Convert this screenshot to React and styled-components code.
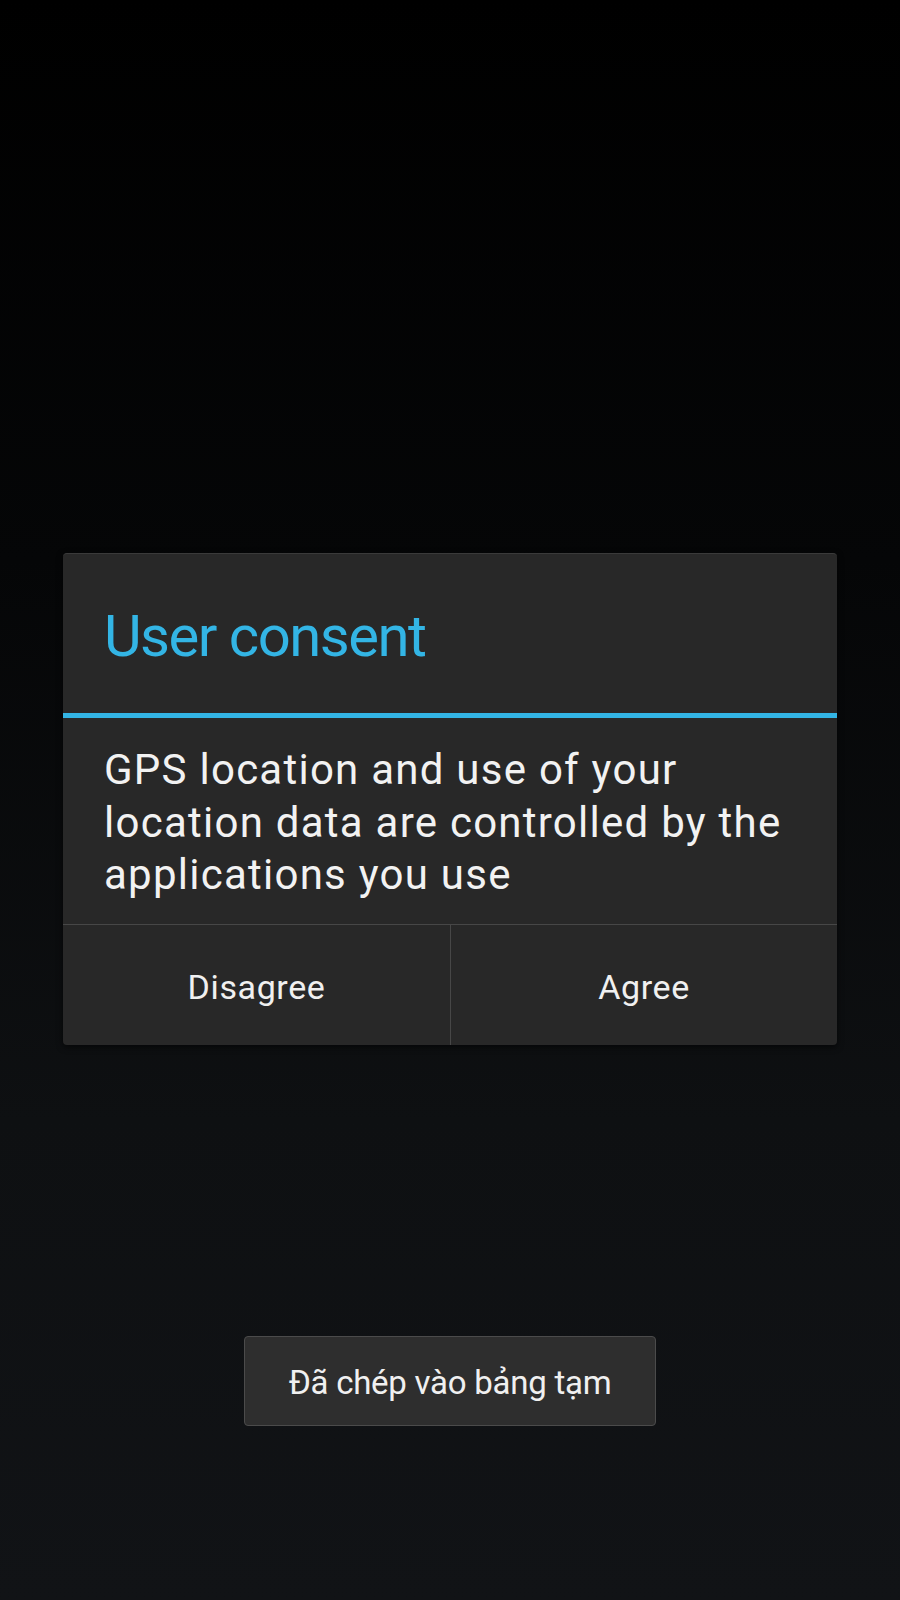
import React from "react";
import styled, { createGlobalStyle } from "styled-components";

const GlobalStyle = createGlobalStyle`
  html, body {
    margin: 0;
    padding: 0;
    background: #000;
  }
  body {
    font-family: Roboto, "Noto Sans", "Liberation Sans", sans-serif;
  }
`;

const Screen = styled.div`
  width: 900px;
  height: 1600px;
  box-sizing: border-box;
  padding-top: 553px;
  display: flex;
  flex-direction: column;
  align-items: center;
  background: linear-gradient(to bottom, #000000 0%, #050607 35%, #0e1012 70%, #111316 100%);
  overflow: hidden;
`;

const Dialog = styled.div`
  width: 774px;
  background: #282828;
  border-radius: 4px;
  border-top: 1px solid #3a3a3a;
  box-shadow: 0 2px 6px rgba(0, 0, 0, 0.6);
  overflow: hidden;
`;

const Header = styled.div`
  padding: 48px 41px 43px;
  border-bottom: 5px solid #33b5e5;
`;

const Title = styled.h1`
  margin: 0;
  font-size: 58px;
  line-height: 68px;
  font-weight: 400;
  letter-spacing: -1.5px;
  color: #33b5e5;
`;

const Message = styled.p`
  margin: 0;
  padding: 26px 41px 22px;
  font-size: 42px;
  line-height: 52.5px;
  letter-spacing: 1.25px;
  color: #f2f2f2;
  border-bottom: 1px solid #474747;
`;

const Actions = styled.div`
  display: grid;
  grid-template-columns: 387px 1fr;
  height: 120px;
`;

const ActionButton = styled.button`
  appearance: none;
  border: none;
  border-left: ${(p) => (p.$divided ? "1px solid #474747" : "none")};
  background: transparent;
  margin: 0;
  padding: 4px 0 0;
  font-family: inherit;
  font-size: 34px;
  letter-spacing: 0.6px;
  color: #f0f0f0;
  cursor: pointer;
`;

const Toast = styled.div`
  margin-top: 291px;
  width: 412px;
  height: 90px;
  box-sizing: border-box;
  display: flex;
  align-items: center;
  justify-content: center;
  padding-top: 3px;
  background: #2e2e2e;
  border: 1.5px solid #4b4b4b;
  border-radius: 4px;
  font-size: 33px;
  letter-spacing: -0.25px;
  color: #f0f0f0;
`;

const App = () => {
  return (
    <>
      <GlobalStyle />
      <Screen>
        <Dialog>
          <Header>
            <Title>User consent</Title>
          </Header>
          <Message>
            GPS location and use of your location data are controlled by the applications you use
          </Message>
          <Actions>
            <ActionButton>Disagree</ActionButton>
            <ActionButton $divided>Agree</ActionButton>
          </Actions>
        </Dialog>
        <Toast>Đã chép vào bảng tạm</Toast>
      </Screen>
    </>
  );
};

export default App;
